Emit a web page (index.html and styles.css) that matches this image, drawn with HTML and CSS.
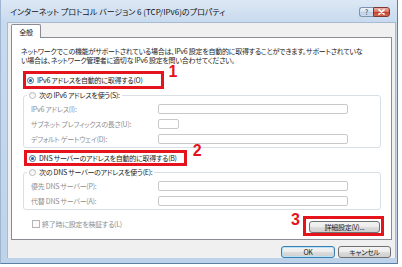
FILE: index.html
```html
<!DOCTYPE html>
<html lang="ja">
<head>
    <meta charset="UTF-8">
    <title>インターネット プロトコル バージョン 6 (TCP/IPv6)のプロパティ</title>
    <link rel="stylesheet" href="styles.css">
</head>
<body>
    <div class="window">
        <div class="titlebar">
            <span class="title">インターネット プロトコル バージョン 6 (TCP/IPv6)のプロパティ</span>
            <div class="caption-btns">
                <span class="cap-btn help">?</span>
                <span class="cap-btn close">
                    <svg width="7" height="6" viewBox="0 0 7 6"><path d="M1 0.8 L6 5.2 M6 0.8 L1 5.2" stroke="#fff" stroke-width="1.6" stroke-linecap="round"/></svg>
                </span>
            </div>
        </div>

        <div class="client">
            <div class="tabs"><span class="tab">全般</span></div>

            <div class="panel">
                <p class="intro">ネットワークでこの機能がサポートされている場合は、IPv6 設定を自動的に取得することができます。サポートされていな<br>い場合は、ネットワーク管理者に適切な IPv6 設定を問い合わせてください。</p>

                <!-- step 1 -->
                <div class="mark mark-1">
                    <span class="step">1</span>
                    <label class="option"><span class="radio checked"></span>IPv6 アドレスを自動的に取得する(O)</label>
                </div>

                <fieldset class="group">
                    <legend><label class="option"><span class="radio"></span>次の IPv6 アドレスを使う(S):</label></legend>
                    <div class="field-row"><span class="field-label">IPv6 アドレス(I):</span><span class="textbox wide"></span></div>
                    <div class="field-row"><span class="field-label">サブネット プレフィックスの長さ(U):</span><span class="textbox short"></span></div>
                    <div class="field-row"><span class="field-label">デフォルト ゲートウェイ(D):</span><span class="textbox wide"></span></div>
                </fieldset>

                <!-- step 2 -->
                <div class="mark mark-2">
                    <span class="step">2</span>
                    <label class="option"><span class="radio checked"></span>DNS サーバーのアドレスを自動的に取得する(B)</label>
                </div>

                <fieldset class="group">
                    <legend><label class="option"><span class="radio"></span>次の DNS サーバーのアドレスを使う(E):</label></legend>
                    <div class="field-row"><span class="field-label">優先 DNS サーバー(P):</span><span class="textbox wide"></span></div>
                    <div class="field-row"><span class="field-label">代替 DNS サーバー(A):</span><span class="textbox wide"></span></div>
                </fieldset>

                <div class="bottom-row">
                    <label class="option disabled"><span class="check"></span>終了時に設定を検証する(L)</label>
                    <!-- step 3 -->
                    <div class="mark mark-3">
                        <span class="step">3</span>
                        <span class="btn advanced">詳細設定(V)...</span>
                    </div>
                </div>
            </div>

            <div class="footer">
                <span class="btn default">OK</span>
                <span class="btn">キャンセル</span>
            </div>
        </div>
    </div>
</body>
</html>
```

FILE: styles.css
```css
body {
    margin: 0;
    background: #fff;
    font-family: "Noto Sans CJK JP", sans-serif;
    font-feature-settings: "palt";
    font-size: 7px;
    letter-spacing: -0.25px;
    color: #1b1b1b;
}
.window {
    width: 398px;
    height: 264px;
    box-sizing: border-box;
    padding: 0 1px 5px 6px;
    display: flex;
    flex-direction: column;
    background: linear-gradient(#dce8f5, #c8daee 22px, #bed3ea);
    border-left: 1px solid #9fb6d0;
    border-right: 1px solid #5c7fa6;
    border-bottom: 1px solid #5c7fa6;
}
.titlebar {
    height: 22px;
    display: flex;
    justify-content: space-between;
    align-items: center;
}
.title {
    padding-left: 3px;
    font-size: 8px;
    letter-spacing: 0;
    color: #111;
    white-space: nowrap;
}
.caption-btns {
    display: flex;
    align-self: flex-start;
    margin: 7px 6px 0 0;
}
.cap-btn {
    height: 10px;
    box-sizing: border-box;
    display: flex;
    align-items: center;
    justify-content: center;
}
.help {
    width: 14px;
    border: 1px solid #7c93b0;
    border-right: none;
    border-radius: 3px 0 0 3px;
    background: linear-gradient(#eef3fa, #d3e0ef 50%, #bfd1e7 51%, #cbdcee);
    color: #60738c;
    font-size: 7px;
    font-weight: bold;
}
.close {
    width: 17px;
    border: 1px solid #7a3a33;
    border-radius: 0 3px 3px 0;
    background: linear-gradient(#eab2a6, #d4705f 50%, #c2412f 51%, #d6684f);
}
.client {
    flex: 1;
    display: flex;
    flex-direction: column;
    background: #f0f0f0;
    border: 1px solid #a7bad0;
    border-bottom: none;
}
.tabs {
    display: flex;
    padding: 1px 0 0 3px;
}
.tab {
    position: relative;
    z-index: 1;
    width: 30px;
    height: 14px;
    box-sizing: border-box;
    margin-bottom: -1px;
    padding-top: 2px;
    text-align: center;
    background: #fff;
    border: 1px solid #898c95;
    border-bottom: none;
    border-radius: 2px 2px 0 0;
}
.panel {
    margin: 0 3px;
    padding-bottom: 3px;
    background: #fff;
    border: 1px solid #898c95;
}
.intro {
    margin: 0;
    padding: 9px 0 0 9px;
    line-height: 9px;
    white-space: nowrap;
}
.option {
    display: flex;
    align-items: center;
    gap: 3px;
    white-space: nowrap;
}
.disabled {
    color: #8e8e8e;
}
.radio {
    width: 7px;
    height: 7px;
    box-sizing: border-box;
    border-radius: 50%;
    border: 1px solid #b9b9b9;
    background: linear-gradient(#f0f0f0, #fff);
    display: flex;
    align-items: center;
    justify-content: center;
}
.radio.checked {
    border-color: #4b6f94;
}
.radio.checked::after {
    content: "";
    width: 3px;
    height: 3px;
    border-radius: 50%;
    background: #1e5ea8;
}
.check {
    width: 8px;
    height: 8px;
    box-sizing: border-box;
    border: 1px solid #b5b5b5;
    background: #fbfbfb;
}

/* red annotation boxes */
.mark {
    position: relative;
    width: fit-content;
    border: 3px solid #e5131b;
}
.mark-1 {
    margin: 6px 0 0 11px;
    padding: 0 18px 0 1px;
    line-height: 12px;
}
.mark-2 {
    margin: 2px 0 0 12px;
    padding: 0 7px 0 2px;
    line-height: 10px;
}
.mark-3 {
    padding: 2px 1px 0 3px;
    line-height: 10px;
}
.step {
    position: absolute;
    top: -8px;
    left: calc(100% + 8px);
    font-family: "Liberation Sans", Arial, sans-serif;
    font-size: 16px;
    font-weight: bold;
    letter-spacing: 0;
    line-height: 12px;
    color: #e5131b;
}
.mark-2 .step {
    left: calc(100% + 9px);
}
.mark-3 .step {
    top: -5px;
    left: auto;
    right: calc(100% + 6px);
}

.group {
    margin: 0 10px 0 11px;
    padding: 0 0 1px 7px;
    min-width: 0;
    border: 1px solid #d8e0e6;
    border-radius: 3px;
}
.group legend {
    margin-left: -4px;
    padding: 0 2px;
    line-height: 12px;
}
.field-row {
    height: 15px;
    display: flex;
    align-items: center;
    color: #8e8e8e;
}
.field-label {
    width: 127px;
    white-space: nowrap;
}
.textbox {
    height: 10px;
    box-sizing: border-box;
    border: 1px solid #c9c9c9;
    border-radius: 2px;
    background: #fff;
}
.wide {
    width: 190px;
}
.short {
    width: 21px;
}
.bottom-row {
    display: flex;
    justify-content: space-between;
    align-items: flex-start;
    margin-top: 6px;
    padding: 0 7px 0 20px;
}
.bottom-row .option {
    margin-top: 1px;
    line-height: 14px;
    gap: 2px;
}
.btn {
    width: 54px;
    height: 12px;
    box-sizing: border-box;
    display: flex;
    align-items: center;
    justify-content: center;
    font-size: 7px;
    border: 1px solid #707070;
    border-radius: 3px;
    background: linear-gradient(#f4f4f4, #ebebeb 50%, #dddddd 51%, #cfcfcf);
    white-space: nowrap;
}
.btn.advanced {
    width: 71px;
}
.btn.default {
    border-color: #3c7fb1;
    box-shadow: inset 0 0 0 1px #b6e1f9;
}
.footer {
    display: flex;
    justify-content: flex-end;
    gap: 3px;
    padding: 6px 4px 0 0;
}
.footer .btn:last-child {
    width: 53px;
}
```
